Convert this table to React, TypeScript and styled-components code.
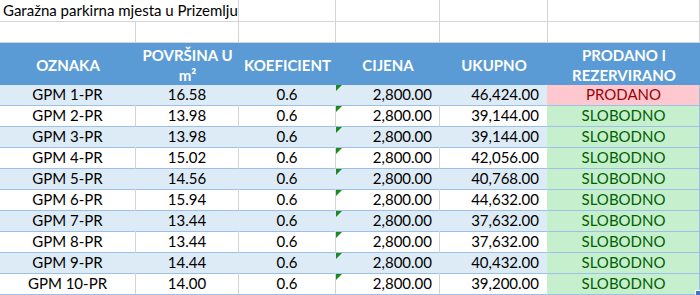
import React from 'react'
import styled, { createGlobalStyle } from 'styled-components'

const GlobalStyle = createGlobalStyle`
  * { box-sizing: border-box; }
  html, body { margin: 0; padding: 0; background: #ffffff; }
  body {
    font-family: Lato, 'Liberation Sans', sans-serif;
    font-size: 15px;
    color: #000;
  }
`

const COLS = '136px 103px 97px 104px 108px 152px'
const GRID = '#d4d4d4'
const BAND = '#9bc2e6'

const rows = [
  { code: 'GPM 1-PR', area: '16.58', total: '46,424.00', sold: true },
  { code: 'GPM 2-PR', area: '13.98', total: '39,144.00' },
  { code: 'GPM 3-PR', area: '13.98', total: '39,144.00' },
  { code: 'GPM 4-PR', area: '15.02', total: '42,056.00' },
  { code: 'GPM 5-PR', area: '14.56', total: '40,768.00' },
  { code: 'GPM 6-PR', area: '15.94', total: '44,632.00' },
  { code: 'GPM 7-PR', area: '13.44', total: '37,632.00' },
  { code: 'GPM 8-PR', area: '13.44', total: '37,632.00' },
  { code: 'GPM 9-PR', area: '14.44', total: '40,432.00' },
  { code: 'GPM 10-PR', area: '14.00', total: '39,200.00' },
]

const Sheet = styled.div`
  width: 700px;
  height: 295px;
  overflow: hidden;
  display: flex;
  flex-direction: column;
`

const Row = styled.div<{ $h: number }>`
  display: grid;
  grid-template-columns: ${COLS};
  height: ${p => p.$h}px;
`

const PlainCell = styled.div<{ $span?: number }>`
  grid-column: span ${p => p.$span || 1};
  border-right: 1px solid ${GRID};
  border-bottom: 1px solid ${GRID};
  padding: 0 3px;
  display: flex;
  align-items: flex-end;
  padding-bottom: 2px;
  white-space: nowrap;
`

const HeaderCell = styled.div`
  background: #5b9bd5;
  color: #ffffff;
  font-weight: 700;
  font-size: 15px;
  line-height: 20px;
  display: flex;
  align-items: center;
  justify-content: center;
  text-align: center;
  padding-top: 2px;
`

const DataCell = styled.div<{
  $align: 'left' | 'center' | 'right'
  $fill: string
  $line: string
  $pr?: number
}>`
  position: relative;
  background: ${p => p.$fill};
  border-bottom: 1px solid ${BAND};
  border-right: 1px solid ${p => p.$line};
  display: flex;
  align-items: flex-end;
  justify-content: ${p =>
    p.$align === 'center' ? 'center' : p.$align === 'right' ? 'flex-end' : 'flex-start'};
  padding: 0 ${p => p.$pr ?? 0}px 2px 0;
  line-height: 18px;
  white-space: nowrap;
`

const StatusCell = styled(DataCell)<{ $sold?: boolean }>`
  color: ${p => (p.$sold ? '#9c0006' : '#006100')};
`

const ErrorMark = styled.span`
  position: absolute;
  top: 0;
  left: 0;
  width: 0;
  height: 0;
  border-top: 6px solid #1a8a1a;
  border-right: 6px solid transparent;
`

const FillHandle = styled.span`
  position: absolute;
  right: -1px;
  bottom: -1px;
  width: 5px;
  height: 5px;
  background: #4472c4;
  border-left: 1px solid #fff;
  border-top: 1px solid #fff;
`

export default function App() {
  return (
    <>
      <GlobalStyle />
      <Sheet>
        <Row $h={22}>
          <PlainCell $span={2}>Garažna parkirna mjesta u Prizemlju</PlainCell>
          <PlainCell />
          <PlainCell />
          <PlainCell />
          <PlainCell />
        </Row>
        <Row $h={21}>
          <PlainCell />
          <PlainCell />
          <PlainCell />
          <PlainCell />
          <PlainCell />
          <PlainCell />
        </Row>
        <Row $h={42}>
          <HeaderCell>OZNAKA</HeaderCell>
          <HeaderCell>
            POVRŠINA U
            <br />
            m²
          </HeaderCell>
          <HeaderCell>KOEFICIENT</HeaderCell>
          <HeaderCell>CIJENA</HeaderCell>
          <HeaderCell>UKUPNO</HeaderCell>
          <HeaderCell>
            PRODANO I
            <br />
            REZERVIRANO
          </HeaderCell>
        </Row>
        {rows.map((r, i) => {
          const banded = i % 2 === 0
          const fill = banded ? '#ddebf7' : '#ffffff'
          const line = banded ? '#ddebf7' : GRID
          const last = i === rows.length - 1
          return (
            <Row $h={21} key={r.code}>
              <DataCell $align="center" $fill={fill} $line={line}>
                {r.code}
              </DataCell>
              <DataCell $align="center" $fill={fill} $line={line}>
                {r.area}
              </DataCell>
              <DataCell $align="center" $fill={fill} $line={line}>
                0.6
              </DataCell>
              <DataCell $align="right" $fill={fill} $line={line} $pr={7}>
                <ErrorMark />
                2,800.00
              </DataCell>
              <DataCell $align="right" $fill={fill} $line={r.sold ? '#ffc7ce' : '#c6efce'} $pr={8}>
                {r.total}
              </DataCell>
              <StatusCell
                $align="center"
                $fill={r.sold ? '#ffc7ce' : '#c6efce'}
                $line={BAND}
                $sold={r.sold}
              >
                {r.sold ? 'PRODANO' : 'SLOBODNO'}
                {last && <FillHandle />}
              </StatusCell>
            </Row>
          )
        })}
      </Sheet>
    </>
  )
}
